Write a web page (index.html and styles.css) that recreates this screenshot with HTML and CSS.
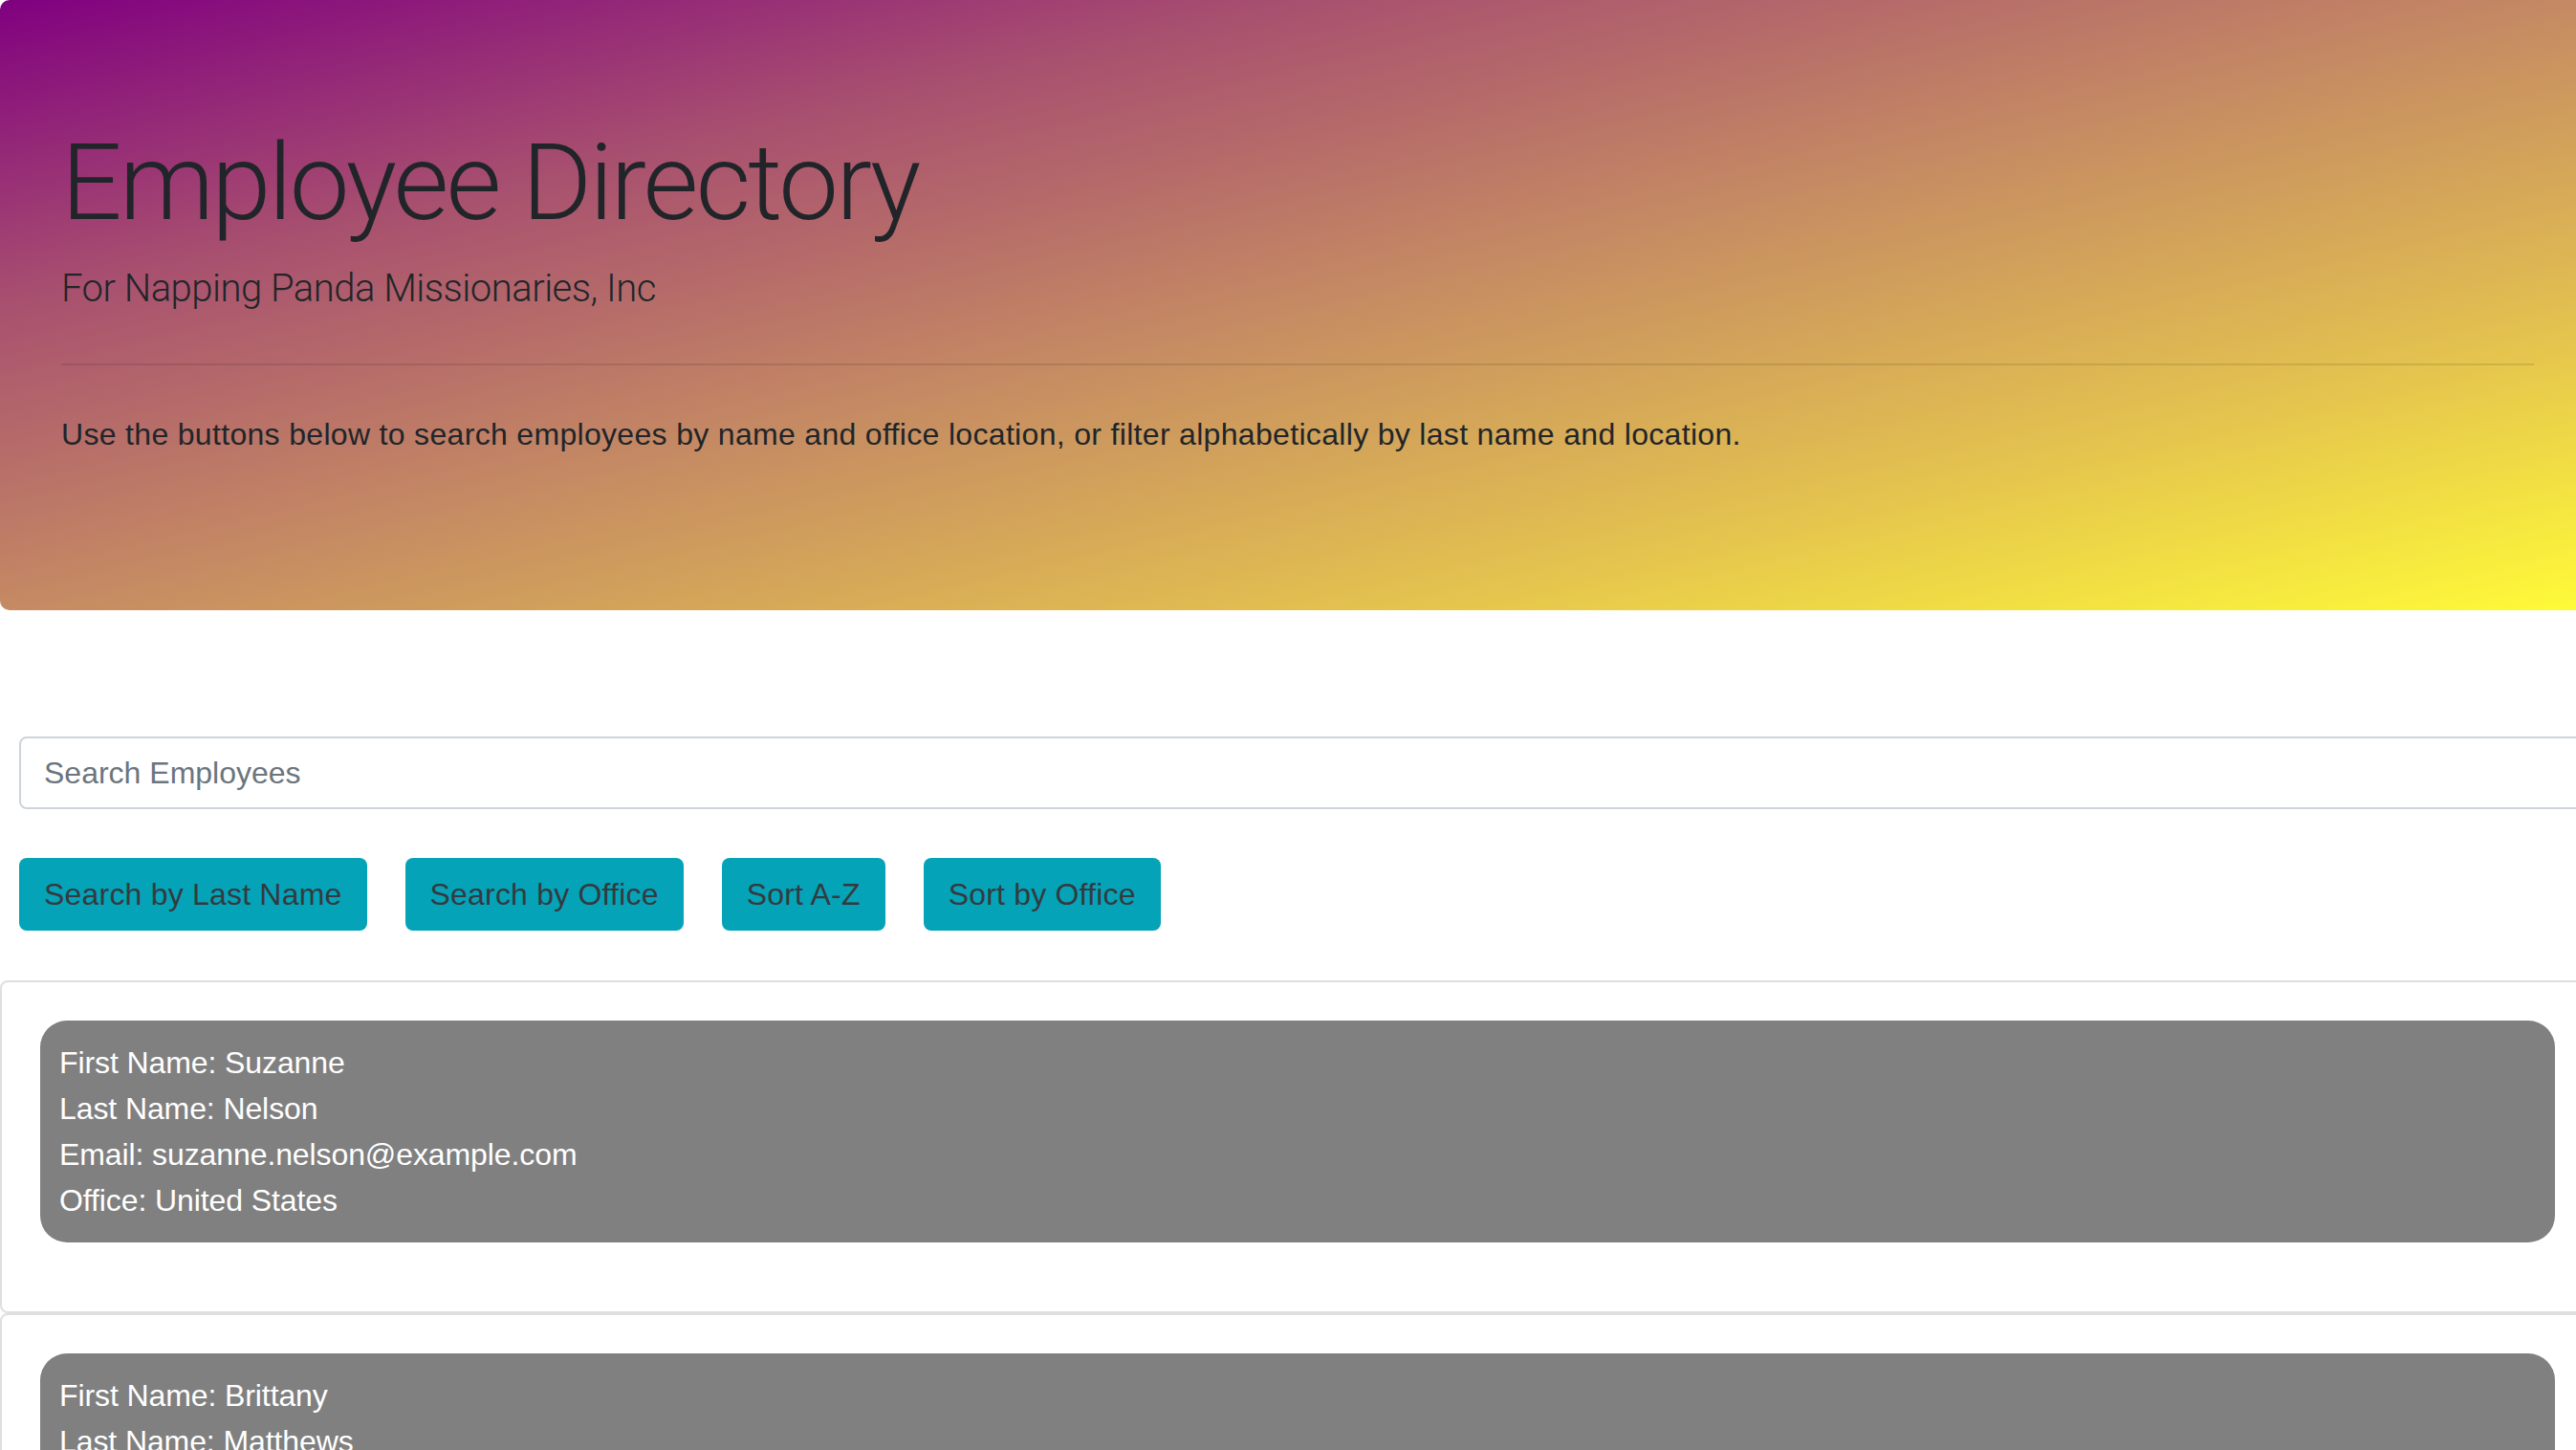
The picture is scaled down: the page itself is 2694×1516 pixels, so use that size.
FILE: index.html
```html
<!DOCTYPE html>
<html lang="en">
<head>
<meta charset="utf-8">
<title>Employee Directory</title>
<link rel="stylesheet" href="styles.css">
</head>
<body>
<div class="page">
  <header class="jumbotron">
    <h1 class="display">Employee Directory</h1>
    <p class="lead">For Napping Panda Missionaries, Inc</p>
    <hr class="divider">
    <p class="intro">Use the buttons below to search employees by name and office location, or filter alphabetically by last name and location.</p>
  </header>
  <main>
    <div class="controls">
      <input class="search" type="text" placeholder="Search Employees">
      <div class="btn-row">
        <button class="btn" type="button">Search by Last Name</button>
        <button class="btn" type="button">Search by Office</button>
        <button class="btn" type="button">Sort A-Z</button>
        <button class="btn" type="button">Sort by Office</button>
      </div>
    </div>
    <div class="card-list">
      <div class="card">
        <div class="card-body">
          <div class="employee">
            <div>First Name: Suzanne</div>
            <div>Last Name: Nelson</div>
            <div>Email: suzanne.nelson@example.com</div>
            <div>Office: United States</div>
          </div>
        </div>
      </div>
      <div class="card">
        <div class="card-body">
          <div class="employee">
            <div>First Name: Brittany</div>
            <div>Last Name: Matthews</div>
            <div>Email: brittany.matthews@example.com</div>
            <div>Office: United States</div>
          </div>
        </div>
      </div>
    </div>
  </main>
</div>
</body>
</html>
```
FILE: styles.css
```css
html {
  overflow: hidden;
}

body {
  margin: 0;
  font-family: "Liberation Sans", Arial, sans-serif;
  font-size: 32px;
  line-height: 1.5;
  color: #212529;
  background: #fff;
}

.page {
  width: 2714px;
}

.jumbotron {
  padding: 124px 64px 160px;
  border-radius: 10px;
  background: linear-gradient(to bottom right, #800080 0%, #a8506f 25%, #c58a63 50%, #e2bf50 75%, #fffb38 100%);
}

.display {
  margin: 0 0 14px;
  font-family: Roboto, "Liberation Sans", sans-serif;
  font-weight: 300;
  font-size: 112px;
  line-height: 1.2;
  letter-spacing: -2.9px;
}

.lead {
  margin: 0 0 48px;
  font-family: Roboto, "Liberation Sans", sans-serif;
  font-weight: 300;
  font-size: 40px;
  line-height: 1.5;
  letter-spacing: -0.5px;
}

.divider {
  margin: 0 0 48px;
  border: 0;
  border-top: 2px solid rgba(0, 0, 0, 0.1);
}

.intro {
  margin: 0;
  letter-spacing: 0.32px;
}

.controls {
  padding: 132px 0 52px 20px;
}

.search {
  display: block;
  box-sizing: border-box;
  width: 100%;
  height: 76px;
  margin: 0;
  padding: 12px 24px;
  border: 2px solid #ced4da;
  border-radius: 8px;
  font: inherit;
  color: #495057;
  background: #fff;
}

.search::placeholder {
  color: #6c757d;
}

.btn-row {
  display: flex;
  gap: 40px;
  margin-top: 51px;
}

.btn {
  margin: 0;
  padding: 12px 24px;
  border: 2px solid transparent;
  border-radius: 8px;
  background: #05a3b8;
  color: #343a40;
  font: inherit;
  letter-spacing: 0.2px;
}

.card {
  border: 2px solid #dfdfdf;
  border-radius: 8px;
}

.card-body {
  padding: 40px;
}

.employee {
  margin-bottom: 32px;
  padding: 20px;
  border-radius: 28px;
  background: #808080;
  color: #fff;
  letter-spacing: -0.1px;
}
```
